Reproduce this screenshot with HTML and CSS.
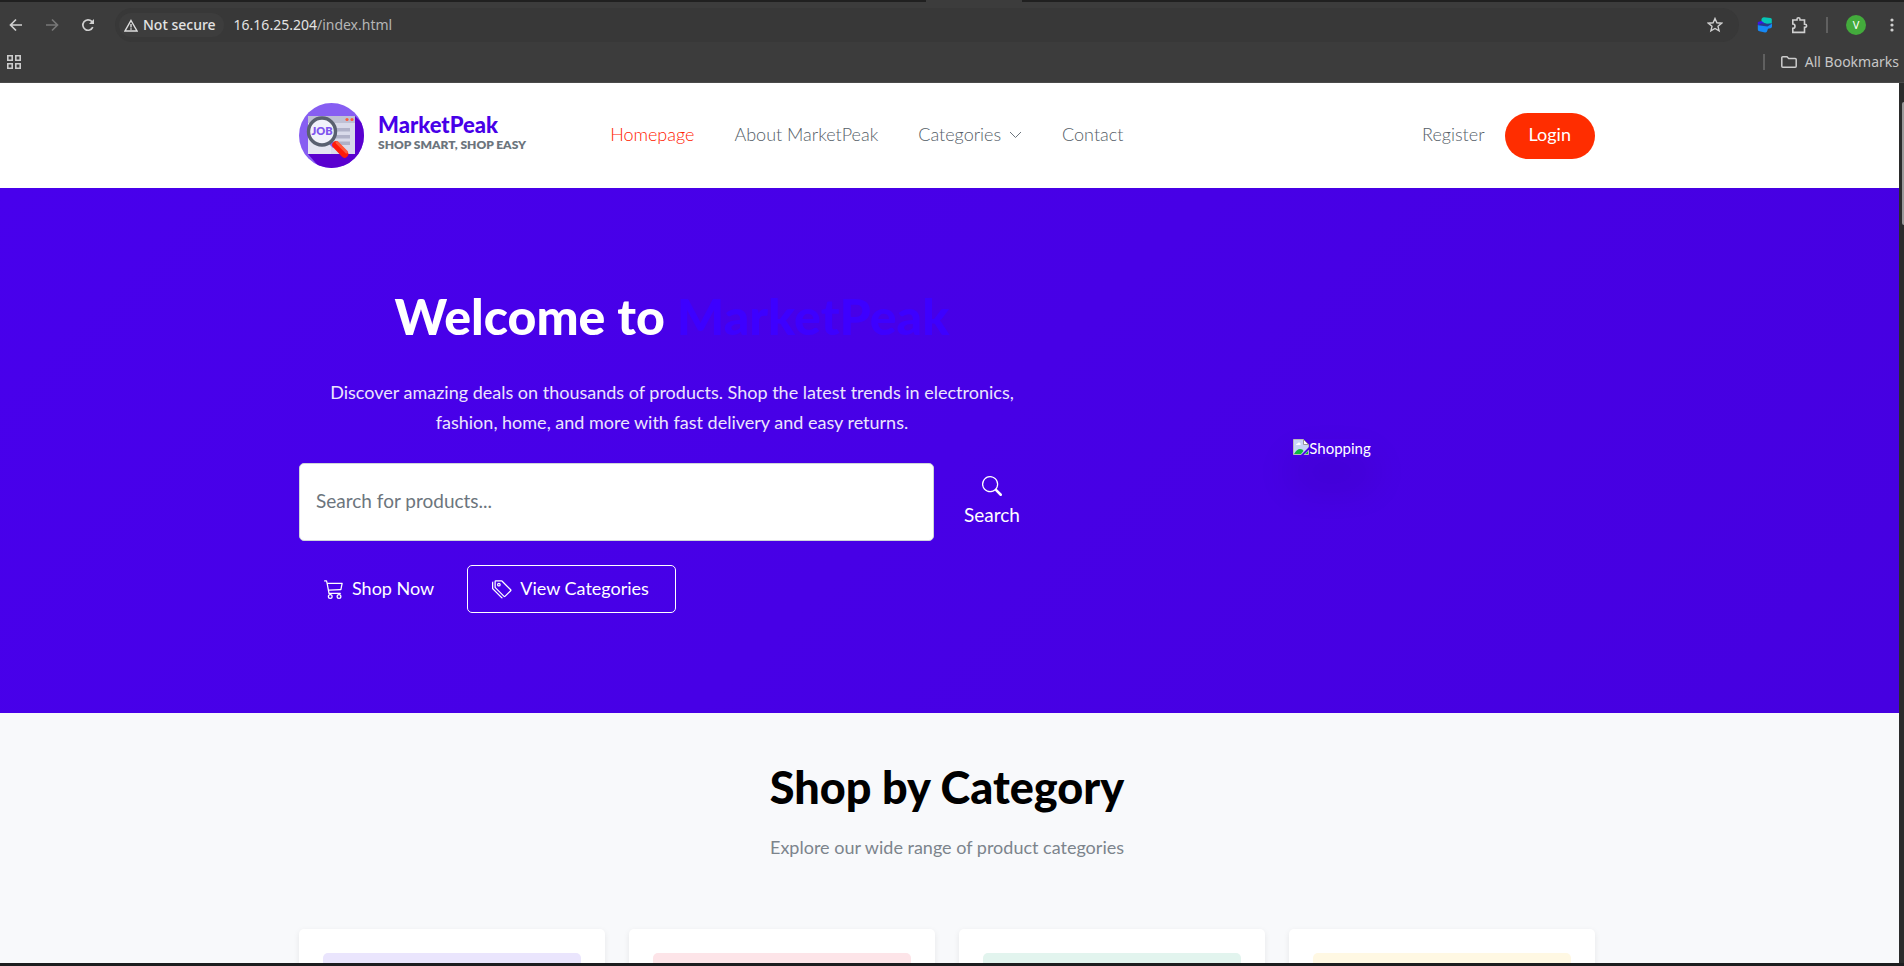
FILE: index.html
```html
<!DOCTYPE html>
<html lang="en">
<head>
<meta charset="utf-8">
<title>MarketPeak</title>
<link rel="stylesheet" href="styles.css">
</head>
<body>
<div class="browser">
  <div class="tab-strip"><span class="active-tab"></span></div>
  <div class="toolbar">
    <button class="tool" aria-label="Back"><svg width="14" height="14" viewBox="0 0 14 14"><path d="M13 7H2M7 1.500L1.500 7 7 12.500" fill="none" stroke="#d0d0d0" stroke-width="1.700"/></svg></button>
    <button class="tool" aria-label="Forward"><svg width="14" height="14" viewBox="0 0 14 14"><path d="M1 7h11M7 1.500L12.500 7 7 12.500" fill="none" stroke="#777" stroke-width="1.700"/></svg></button>
    <button class="tool" aria-label="Reload"><svg width="14" height="14" viewBox="0 0 14 14"><path d="M11.800 9.200A5.200 5.200 0 1 1 10.800 3.400L12 4.700" fill="none" stroke="#d0d0d0" stroke-width="1.700"/><path d="M13 1v5H8z" fill="#d0d0d0"/></svg></button>
    <div class="address">
      <span class="security"><svg width="14" height="13" viewBox="0 0 14 13"><path d="M7 1.500L13 12H1zM7 5v3.500M7 9.300v1.400" fill="none" stroke="#ddd" stroke-width="1.400"/></svg>Not secure</span>
      <span class="url">16.16.25.204<span class="url-path">/index.html</span></span>
      <button class="star" aria-label="Bookmark this page"><svg width="16" height="16" viewBox="0 0 16 16"><path d="M8 1.500l1.900 4.300 4.700.4-3.600 3.100 1.100 4.600L8 11.500l-4.100 2.400L5 9.300 1.400 6.200l4.700-.4z" fill="none" stroke="#d0d0d0" stroke-width="1.400"/></svg></button>
    </div>
    <div class="extensions">
      <button class="tool" aria-label="Extension"><svg width="16" height="16" viewBox="0 0 16 16"><path d="M4.500 2Q5.200.2 7 .3l6.500.7q1.300.3 1.300 1.600V6L10 7.200 4.500 5z" fill="#06c5b5"/><path d="M4.500 4L.8 5v3L9 7.600z" fill="#3a16e8"/><path d="M.8 8L15 6.500v3q-.2 1.500-1.500 1.800l-2.500.4-1 2.800q-.6 1.200-2 1l-5.600-1.200Q.9 14 .8 12.500z" fill="#1688f5"/><path d="M4.500 6.300l10 .7-4 2.500L1 8.200z" fill="#243a8c"/></svg></button>
      <button class="tool" aria-label="Extensions"><svg width="17" height="17" viewBox="0 0 17 17"><path d="M1.800 3H6V2.300a1.500 1.500 0 0 1 3 0V3h4.500v4.200h.5a1.600 1.600 0 0 1 0 3.200h-.5v5H1.800v-4A2.200 2.200 0 0 0 1.800 7z" fill="none" stroke="#d0d0d0" stroke-width="1.600"/></svg></button>
      <span class="divider"></span>
      <button class="avatar">V</button>
      <button class="tool" aria-label="Menu"><svg width="4" height="16" viewBox="0 0 4 16" fill="#d0d0d0"><circle cx="2" cy="3" r="1.600"/><circle cx="2" cy="8" r="1.600"/><circle cx="2" cy="13" r="1.600"/></svg></button>
    </div>
  </div>
  <div class="bookmarks">
    <button class="tool" aria-label="Apps"><svg width="14" height="14" viewBox="0 0 14 14" fill="none" stroke="#ccc" stroke-width="1.600"><path d="M.8.8h4.400v4.400H.8zM8.800.8h4.400v4.400H8.800zM.8 8.800h4.400v4.400H.8zM8.800 8.800h4.400v4.400H8.800z"/></svg></button>
    <button class="all-bookmarks"><span class="divider"></span><svg width="16" height="12" viewBox="0 0 16 12"><path d="M.8 10V1.800Q.8.800 1.800.800H6l1.700 1.700h6.500q1 0 1 1V10.200q0 1-1 1H1.800q-1 0-1-1z" fill="none" stroke="#ccc" stroke-width="1.500"/></svg>All Bookmarks</button>
  </div>
</div>
<div class="viewport">
  <div class="page">
    <header class="site-header">
      <div class="container header-row">
        <a class="brand" href="#">
          <svg class="logo" width="65" height="65" viewBox="0 0 65 65">
            <defs><clipPath id="disc"><circle cx="32.500" cy="32.500" r="32.500"/></clipPath></defs>
            <g clip-path="url(#disc)">
              <path d="M0 0h65v65H0z" fill="#875ef2"/>
              <path d="M56 13l9 9v43H21L9 51z" fill="#5a00cf"/>
              <path d="M9 13h47v38H9z" fill="#e4e5f1"/><path d="M32 13h24v38H32z" fill="#d9daea"/>
              <path d="M9 13h47v7H9z" fill="#bfc0d4"/>
              <circle cx="48" cy="16.500" r="1.600" fill="#ff5a3c"/><circle cx="53" cy="16.500" r="1.600" fill="#ff5a3c"/>
              <path d="M32 25h19v3.500H32zM32 32h19v3.500H32zM32 38.500h19V42H32z" fill="#b0b1c8"/>
            </g>
            <path d="M32 37l5 5-3 3-5-5z" fill="#8b5cf6"/>
            <path d="M37 42l8.500 9" stroke="#ff1a0a" stroke-width="7.500" stroke-linecap="round"/><path d="M38 39.500l9.500 9.500" stroke="#ff5a3c" stroke-width="3" stroke-linecap="round"/>
            <circle cx="23" cy="28.500" r="13.500" fill="#f1f2fb" stroke="#596070" stroke-width="3.400"/>
            <text class="logo-text" x="23" y="32" text-anchor="middle">JOB</text>
          </svg>
          <span class="brand-text"><span class="brand-name">MarketPeak</span><span class="tagline">SHOP SMART, SHOP EASY</span></span>
        </a>
        <nav class="nav">
          <a class="active" href="#">Homepage</a>
          <a href="#">About MarketPeak</a>
          <a href="#">Categories<svg width="13" height="13" viewBox="0 0 13 13"><path d="M1 4l5.500 5.500L12 4" fill="none" stroke="#6c757d"/></svg></a>
          <a href="#">Contact</a>
        </nav>
        <div class="account"><a href="#">Register</a><a class="login" href="#">Login</a></div>
      </div>
    </header>
    <section class="hero">
      <div class="container hero-grid">
        <div class="hero-copy">
          <h1>Welcome to <span>MarketPeak</span></h1>
          <p>Discover amazing deals on thousands of products. Shop the latest trends in electronics, fashion, home, and more with fast delivery and easy returns.</p>
          <form class="search">
            <input type="search" placeholder="Search for products..." aria-label="Search for products">
            <button type="button"><svg width="20" height="20" viewBox="0 0 16 16" fill="#fff"><path d="M11.742 10.344a6.500 6.500 0 1 0-1.397 1.398q.044.06.098.115l3.850 3.850a1 1 0 0 0 1.415-1.414l-3.850-3.850a1 1 0 0 0-.115-.1zM12 6.500a5.500 5.500 0 1 1-11 0 5.500 5.500 0 0 1 11 0"/></svg>Search</button>
          </form>
          <div class="actions">
            <a class="action" href="#"><svg width="20" height="20" viewBox="0 0 16 16" fill="#fff"><path d="M0 1.500A.5.5 0 0 1 .5 1H2a.5.5 0 0 1 .485.379L2.890 3H14.500a.5.5 0 0 1 .49.598l-1 5a.5.5 0 0 1-.465.401l-9.397.472L4.415 11H13a.5.5 0 0 1 0 1H4a.5.5 0 0 1-.491-.408L2.010 3.607 1.610 2H.5a.5.5 0 0 1-.5-.5M3.102 4l.84 4.479 9.144-.459L13.890 4zM5 12a2 2 0 1 0 0 4 2 2 0 0 0 0-4m7 0a2 2 0 1 0 0 4 2 2 0 0 0 0-4m-7 1a1 1 0 1 1 0 2 1 1 0 0 1 0-2m7 0a1 1 0 1 1 0 2 1 1 0 0 1 0-2"/></svg><span>Shop Now</span></a>
            <a class="action outlined" href="#"><svg width="20" height="20" viewBox="0 0 16 16" fill="#fff"><path d="M3 2v4.586l7 7L14.586 9l-7-7zM2 2a1 1 0 0 1 1-1h4.586a1 1 0 0 1 .707.293l7 7a1 1 0 0 1 0 1.414l-4.586 4.586a1 1 0 0 1-1.414 0l-7-7A1 1 0 0 1 2 6.586z"/><path d="M5.500 5a.5.5 0 1 1 0-1 .5.5 0 0 1 0 1m0 1a1.500 1.500 0 1 0 0-3 1.500 1.500 0 0 0 0 3M1 7.086a1 1 0 0 0 .293.707L8.750 15.250l-.043.043a1 1 0 0 1-1.414 0l-7-7A1 1 0 0 1 0 7.586V3a1 1 0 0 1 1-1z"/></svg><span>View Categories</span></a>
          </div>
        </div>
        <div class="hero-media"><span class="missing"><svg width="16" height="16" viewBox="0 0 16 16"><path d="M.5.5h10l5 5v10H.5z" fill="#c6d4f8" stroke="#b9b9b9"/><path d="M10.500.5v5h5z" fill="#fff" stroke="#999"/><path d="M3 6q0-1.500 1.500-1.500Q5 3 6.500 3.500 8 4 7.500 6z" fill="#fff"/><path d="M1 15q3-5 6-5t3.500 2L8 15z" fill="#10b840"/><path d="M12 15l3-3v3z" fill="#10b840"/><path d="M8 16l8-8v2.500L10.500 16z" fill="#4700e8"/></svg>Shopping</span></div>
      </div>
    </section>
    <section class="categories">
      <div class="container">
        <h2>Shop by Category</h2>
        <p>Explore our wide range of product categories</p>
        <div class="cards">
          <article class="card"><div class="thumb violet"></div></article>
          <article class="card"><div class="thumb pink"></div></article>
          <article class="card"><div class="thumb green"></div></article>
          <article class="card"><div class="thumb yellow"></div></article>
        </div>
      </div>
    </section>
  </div>
  <div class="scrollbar"><span class="scroll-thumb"></span></div>
</div>
<div class="desktop-edge"></div>
</body>
</html>
```
FILE: styles.css
```css
* { box-sizing: border-box; }
body { margin: 0; height: 100vh; display: flex; flex-direction: column; overflow: hidden; font-family: Lato, sans-serif; background: #1d1d1f; }
button { border: 0; padding: 0; background: none; color: inherit; font: inherit; }
a { color: inherit; text-decoration: none; }
svg { display: block; flex: none; }

.browser { flex: none; background: #3c3c3c; color: #c7c7c7; border-bottom: 1px solid #4a4a4a; font: 14px/20px "Noto Sans", sans-serif; }
.tab-strip { height: 2px; background: #202020; display: flex; justify-content: center; }
.active-tab { width: 96px; background: #3c3c3c; margin-left: 44px; }
.toolbar { display: flex; align-items: center; height: 46px; padding: 0 10px 0 9px; gap: 22px; }
.address { flex: 1; display: flex; align-items: center; height: 34px; padding: 0 16px 0 4px; border-radius: 17px; background: #383838; margin-left: -2px; }
.security { display: flex; align-items: center; gap: 5px; height: 24px; padding: 0 8px 0 5px; border-radius: 12px; background: #3d3d3d; color: #e3e3e3; font-weight: 500; }
.url { color: #e3e3e3; margin-left: 10px; flex: 1; }
.url-path { color: #b5b5b5; }
.extensions { display: flex; align-items: center; gap: 18px; margin-left: -4px; }
.divider { width: 2px; height: 16px; background: #606060; }
.avatar { width: 20px; height: 20px; margin-right: 6px; border-radius: 50%; background: #43ab3c; color: #fff; font-size: 11px; line-height: 20px; }
.bookmarks { display: flex; align-items: center; justify-content: space-between; height: 34px; padding: 0 5px 6px 7px; }
.all-bookmarks { display: flex; align-items: center; gap: 8px; }
.all-bookmarks .divider { margin-right: 8px; }

.viewport { flex: 1; min-height: 0; display: flex; }
.page { flex: 1; overflow: hidden; background: #f8f9fb; }
.scrollbar { flex: none; width: 5px; padding: 19px 0 0 3px; background: #2b2c2c; }
.scroll-thumb { display: block; height: 123px; background: #9a9a9a; border-radius: 2px 0 0 2px; }
.desktop-edge { flex: none; height: 3px; background: #1d1d1f; }
.container { max-width: 1296px; margin: 0 auto; }

.site-header { background: #fff; padding: 20px 5px 20px 0; color: #555e68; }
.header-row { display: flex; align-items: center; font-size: 18px; font-weight: 300; line-height: 26px; }
.brand { display: flex; align-items: center; gap: 14px; }
.logo-text { font: 800 11px Lato, sans-serif; fill: #8055ee; }
.brand-text { display: flex; flex-direction: column; padding-bottom: 4px; }
.brand-name { color: #4700e8; font-size: 22px; font-weight: 900; line-height: 22px; }
.tagline { color: #6c757d; font-size: 12px; font-weight: 800; line-height: 18px; }
.nav { display: flex; gap: 40px; margin-left: 84px; padding-bottom: 3px; }
.nav a { display: flex; align-items: center; gap: 8px; }
.nav .active { color: #ff2000; }
.account { display: flex; align-items: center; gap: 20px; margin-left: auto; }
.account a { padding-bottom: 3px; }
.account .login { padding: 8px 24px 12px; border-radius: 23px; background: #ff2d00; color: #fff; font-weight: 400; }

.hero { padding: 100px 5px 100px 0; color: #fff; background: linear-gradient(135deg, #4800ec, #4600e0); }
.hero-grid { display: grid; grid-template-columns: 746fr 526fr; gap: 24px; align-items: center; }
.hero h1 { margin: 0 0 33px; text-align: center; font-size: 50px; font-weight: 900; line-height: 56px; }
.hero h1 span { color: #3d00ff; }
.hero p { margin: 0 0 26px; padding: 0 24px; text-align: center; font-size: 18px; line-height: 30px; color: #ece5fd; }
.search { display: flex; gap: 8px; margin-bottom: 24px; font-size: 19px; }
.search input { width: 635px; min-width: 0; height: 78px; padding: 0 16px 4px; border: 1px solid #ced4da; border-radius: 5px; background: #fff; font: inherit; }
.search input::placeholder { color: #6c757d; opacity: 1; }
.search button { display: flex; flex-direction: column; align-items: center; justify-content: center; gap: 6px; padding: 0 22px; line-height: 26px; }
.actions { display: flex; gap: 8px; font-size: 18px; line-height: 26px; }
.action { display: flex; align-items: center; gap: 8px; padding: 10px 24px; border: 1px solid transparent; border-radius: 5px; }
.action span { padding-bottom: 2px; line-height: 24px; }
.outlined { padding: 10px 26px 10px 24px; border-color: #fff; }
.hero-media { display: flex; justify-content: center; padding-bottom: 6px; }
.missing { display: flex; font-size: 15px; line-height: 18px; box-shadow: 0 24px 40px rgba(0, 0, 0, .15); }

.categories { padding: 50px 5px 0 0; text-align: center; }
.categories h2 { margin: 0; font-size: 45px; font-weight: 900; line-height: 48px; color: #000; }
.categories p { margin: 22px 0 68px; font-size: 18px; line-height: 28px; color: #7c848c; }
.cards { display: grid; grid-template-columns: repeat(4, 1fr); gap: 24px; }
.card { height: 300px; padding: 24px; border-radius: 5px; background: #fff; box-shadow: 0 2px 6px rgba(0, 0, 0, .08); }
.thumb { height: 120px; border-radius: 5px; }
.violet { background: #eae5fd; }
.pink { background: #fde4e8; }
.green { background: #e2f4ee; }
.yellow { background: #fff8e3; }
```
